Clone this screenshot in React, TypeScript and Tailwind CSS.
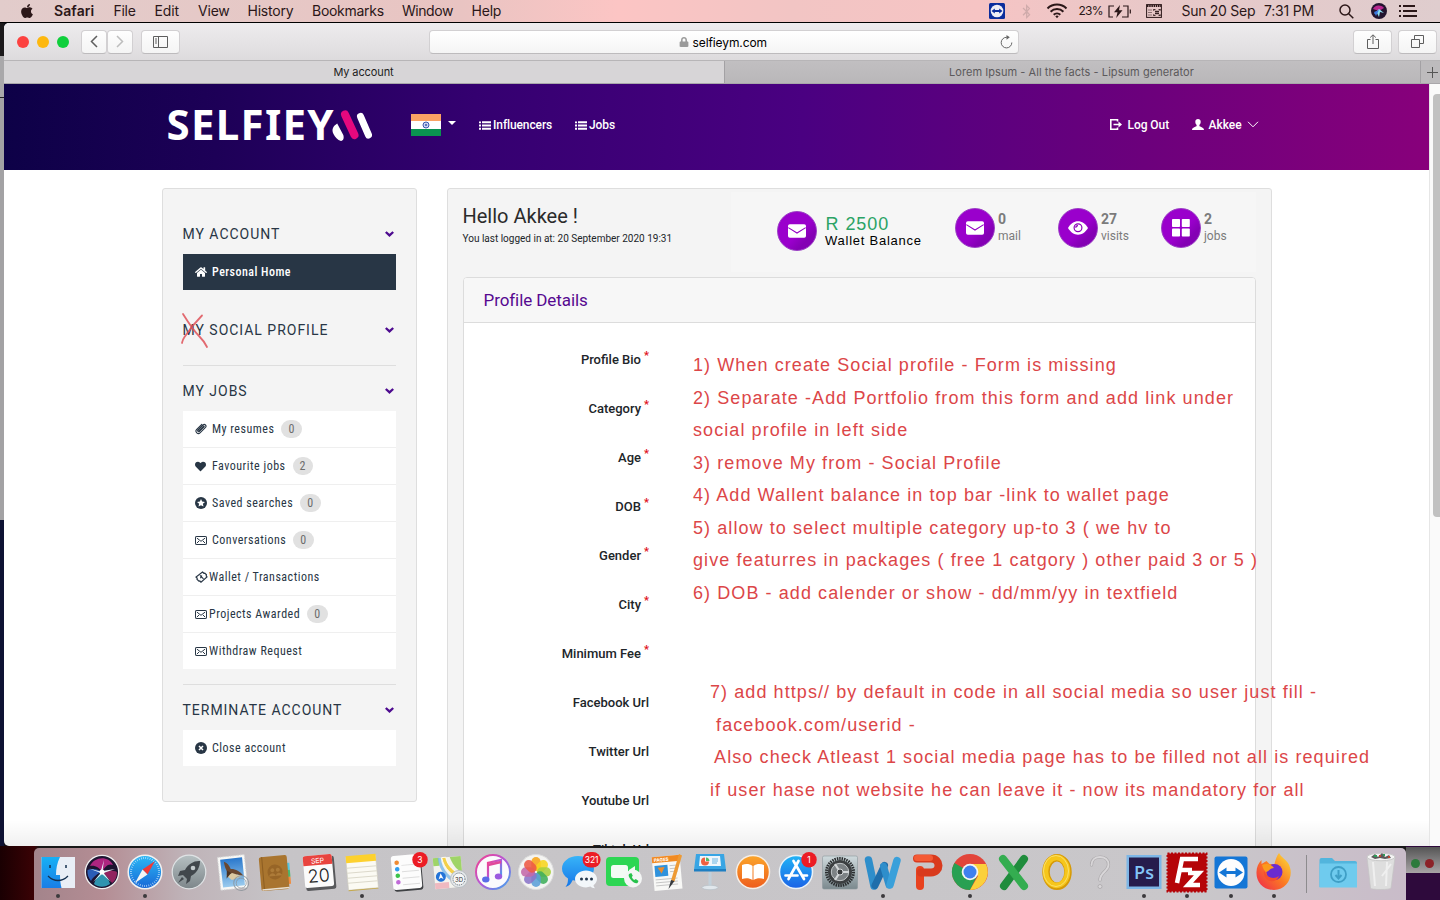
import type { ReactNode } from "react";
import { FaApple, FaHeart, FaHome, FaLock, FaBluetoothB } from "react-icons/fa";

/* ---------- macOS menu bar ---------- */

const menus: [string, string][] = [
  ["File", "w-[41px] tracking-[-0.3px]"],
  ["Edit", "w-[43.5px] tracking-[-0.1px]"],
  ["View", "w-[49.5px] tracking-[-0.2px]"],
  ["History", "w-[64.5px] tracking-[-0.22px]"],
  ["Bookmarks", "w-[90px] tracking-[-0.28px]"],
  ["Window", "w-[69.5px] tracking-[-0.45px]"],
  ["Help", "w-[40px] tracking-[-0.2px]"],
];

function MenuBar() {
  return (
    <div className="flex h-[23px] shrink-0 items-center border-b border-black bg-[linear-gradient(90deg,#e2cccb_0%,#e6c8c6_18%,#e9c4c2_32%,#fcc5c4_43%,#f2c5c4_55%,#f6c4c4_68%,#e8c8c8_80%,#dfcdce_100%)] pl-[19px] text-sm text-[#2b1718] font-[Inter,sans-serif]">
      <FaApple className="size-[16px]" />
      <span className="ml-[19px] w-[59.5px] font-semibold tracking-[0.1px]">Safari</span>
      {menus.map(([m, c]) => (
        <span key={m} className={c}>{m}</span>
      ))}
      <svg className="ml-[477.5px] shrink-0" width="16" height="16" viewBox="0 0 16 16">
        <rect width="16" height="16" rx="1.5" fill="#0c2d9c" />
        <circle cx="8" cy="8" r="6.3" fill="#f0eef5" />
        <path d="M2.5 8l3.3-2.6V7h4.4V5.4L13.5 8l-3.300 2.600V9H5.800v1.600z" fill="#0c2d9c" />
      </svg>
      <FaBluetoothB className="ml-[14px] size-[15px] shrink-0 text-[#cfabab]" />
      <svg className="ml-[12px] shrink-0" width="22" height="16" viewBox="0 0 22 16" fill="none" stroke="#2b1718" strokeWidth="2">
        <path d="M1.500 5.500a13.500 13.500 0 0 1 19 0M4.600 8.700a9 9 0 0 1 12.800 0M7.700 11.800a4.700 4.700 0 0 1 6.600 0" />
        <path d="M9.300 13.300a2.400 2.400 0 0 1 3.400 0L11 15.200z" fill="#2b1718" stroke="none" />
      </svg>
      <span className="ml-[10.500px] w-[29px] shrink-0 text-xs tracking-[-0.7px]">23%</span>
      <svg className="shrink-0" width="23" height="13" viewBox="0 0 23 13" fill="none" stroke="#2b1718" strokeWidth="1.200">
        <path d="M6 1H1v11h4M15 1h5v11h-6" />
        <path d="M22.300 4.500v4" />
        <path d="M12 0L6 7.200h3.500L8.200 13l6.300-7.700H11z" fill="#2b1718" stroke="none" />
      </svg>
      <svg className="ml-[15px] shrink-0" width="16" height="14" viewBox="0 0 16 14" fill="none" stroke="#2b1718">
        <rect x=".6" y=".6" width="14.800" height="12.800" />
        <path d="M1 2h14" strokeWidth="2" strokeDasharray="1.500 .7" />
        <path d="M2.500 6h3M2.500 8.500h3M2.500 11h3" strokeDasharray="1 1" />
        <path d="M9 7.500h4M9 9.500h4M10 6.500v4M12 6.500v4" strokeWidth=".9" />
        <path d="M7.500 5.500h2M12.500 5.500h2M7.500 11.500h2M12.500 11.500h2M7.800 5v2M14 5v2M7.800 10v2M14 10v2" strokeWidth=".8" />
      </svg>
      <span className="ml-[20px] w-[82.500px] shrink-0 tracking-[-0.28px]">Sun 20 Sep</span>
      <span className="w-[75px] shrink-0 tracking-[-0.2px]">7:31 PM</span>
      <svg className="shrink-0" width="15" height="15" viewBox="0 0 15 15" fill="none" stroke="#2b1718" strokeWidth="1.500">
        <circle cx="6" cy="6" r="5" />
        <path d="M9.700 9.700l4.600 4.600" />
      </svg>
      <svg className="ml-[17px] shrink-0" width="16" height="16" viewBox="0 0 16 16">
        <circle cx="8" cy="8" r="8" fill="#23142f" />
        <path d="M2 6a6.500 6.500 0 0 1 11 -1l-5 3z" fill="#b8288f" />
        <path d="M3 11l5-5 5 4-4-1-1 5-2-4z" fill="#8ce0f2" />
        <path d="M3 9l2 4 3-6z" fill="#3b78e0" />
      </svg>
      <svg className="ml-[12px] shrink-0" width="18" height="12" viewBox="0 0 18 12" stroke="#2b1718" strokeWidth="2">
        <path d="M0 1h2M4 1h12M0 6h2M4 6h14M0 11h2M4 11h14" />
      </svg>
    </div>
  );
}

/* ---------- Safari chrome ---------- */

function ToolButton({ className, children }: { className: string; children: ReactNode }) {
  return (
    <div className={"flex h-[24px] shrink-0 items-center justify-center rounded-[4px] border border-[#d2d0d2] border-b-[#bdbbbd] bg-[linear-gradient(#fefefe,#f4f4f4)] text-[#5e5e5e] " + className}>
      {children}
    </div>
  );
}

function Toolbar() {
  return (
    <div className="flex h-[38px] shrink-0 items-center border-b border-[#b7b5b7] bg-[linear-gradient(#eeecee,#dddbdd)] pl-[13px]">
      <i className="size-[12px] rounded-full bg-[#fc4240]" />
      <i className="ml-2 size-[12px] rounded-full bg-[#fdb80f]" />
      <i className="ml-2 size-[12px] rounded-full bg-[#10cf3c]" />
      <ToolButton className="ml-[12px] w-[26px]">
        <svg width="8" height="13" viewBox="0 0 8 13" fill="none" stroke="currentColor" strokeWidth="1.500"><path d="M7 1L1.500 6.500 7 12" /></svg>
      </ToolButton>
      <ToolButton className="w-[26px]">
        <svg width="8" height="13" viewBox="0 0 8 13" fill="none" stroke="#bdbdbd" strokeWidth="1.500"><path d="M1 1l5.500 5.500L1 12" /></svg>
      </ToolButton>
      <ToolButton className="ml-[8px] w-[39px]">
        <svg width="15" height="12" viewBox="0 0 15 12" fill="none" stroke="currentColor"><path d="M.5.5h14v11H.5zM5.500.5v11M2 3h2M2 5h2M2 7h2" /></svg>
      </ToolButton>
      <div className="ml-[249px] flex h-[24px] w-[590px] items-center rounded-[4px] border border-[#d2d0d2] border-b-[#bdbbbd] bg-[linear-gradient(#ffffff,#f4f4f4)] pl-[249px] text-xs text-black font-[Inter,sans-serif]">
        <FaLock className="size-[10px] text-[#9a9a9a]" />
        <span className="relative top-px ml-[3.500px] tracking-[-0.1px]">selfieym.com</span>
        <svg className="ml-auto mr-[5px]" width="13" height="14" viewBox="0 0 13 14" fill="none" stroke="#666"><path d="M11.800 7.500A5.300 5.300 0 1 1 6.500 2.300h2" /><path d="M6.500 0l3.300 2.300-3.300 2.400z" fill="#666" stroke="none" /></svg>
      </div>
      <ToolButton className="ml-[334px] w-[39px]">
        <svg width="12" height="15" viewBox="0 0 12 15" fill="none" stroke="currentColor"><path d="M3.500 5.500h-3v9h11v-9h-3M6 10V1M3.200 3.500L6 .8l2.800 2.700" /></svg>
      </ToolButton>
      <ToolButton className="ml-[6px] w-[39px]">
        <svg width="13" height="13" viewBox="0 0 13 13" fill="none" stroke="currentColor"><path d="M.5 4.500h8v8h-8zM3.500 4V.5h9v8H9" /></svg>
      </ToolButton>
    </div>
  );
}

function TabBar() {
  return (
    <div className="flex h-[23px] shrink-0 border-b border-[#a9a7aa] text-[11px] leading-[22px] font-[Inter,sans-serif]">
      <div className="w-[720px] bg-[#d7d5d7] text-center text-[#1d1d1d]"><span className="relative -left-[0.500px] tracking-[-0.1px]">My account</span></div>
      <div className="w-[697px] border-x border-[#a3a1a4] bg-[linear-gradient(#c1bfc1,#b9b7b9)] text-center text-[#5b595b]"><span className="relative -left-[1px] tracking-[0.05px]">Lorem Ipsum - All the facts - Lipsum generator</span></div>
      <div className="flex flex-1 items-center bg-[#bdbbbd] pl-[6px] text-[#555]">
        <svg width="11" height="11" viewBox="0 0 11 11" stroke="currentColor"><path d="M5.500 0v11M0 5.500h11" /></svg>
      </div>
    </div>
  );
}

/* ---------- Site header ---------- */

const ListIcon = () => (
  <svg width="12" height="9" viewBox="0 0 12 9" fill="currentColor">
    <path d="M0 .4h2v1.900H0zM0 3.600h2v1.900H0zM0 6.800h2v1.900H0zM3 .3h9v2H3zM3 3.500h9v2H3zM3 6.700h9v2H3z" />
  </svg>
);

function SiteHeader() {
  return (
    <header className="flex h-[86px] shrink-0 items-center bg-[linear-gradient(92deg,#0d0147_0%,#1d0057_15%,#340070_33%,#4a0081_56%,#6c007c_80%,#88007b_100%)] pb-1 pl-[162px] text-xs font-medium text-white font-[Roboto,sans-serif]">
      <div className="flex h-[42px] w-[245px] items-center pl-[0.5px]">
        <span className="-mt-[2px] text-[42px] leading-[42px] font-bold tracking-[1.3px] font-[Noto_Sans,sans-serif]">SELFIEY</span>
        <svg className="-ml-[4px] shrink-0" width="44" height="32" viewBox="0 0 44 32">
          <path d="M6.200 14.500C1.500 17.500.5 21 2.500 25c1.500 3.300 4 6 7.500 7 2.500-.4 3.200-3 2.300-6z" fill="#fff" />
          <path d="M14 5.500l9.500 20.500" stroke="#e5087e" strokeWidth="8" strokeLinecap="round" />
          <path d="M29.500 7.500l8 18.500" stroke="#fff" strokeWidth="7" strokeLinecap="round" />
        </svg>
      </div>
      <svg width="30" height="22" viewBox="0 0 30 22">
        <path fill="#fba364" d="M0 0h30v7.500H0z" />
        <path fill="#fff" d="M0 7h30v8H0z" />
        <path fill="#0a9350" d="M0 15h30v7H0z" />
        <circle cx="15" cy="11" r="3" fill="#c9d2f0" stroke="#3a56b0" />
        <circle cx="15" cy="11" r="1" fill="#3a56b0" />
      </svg>
      <svg className="mb-[5px] ml-[7px]" width="8" height="4" viewBox="0 0 8 4"><path d="M0 0h8L4 4z" fill="#fff" /></svg>
      <a className="ml-[23px] flex items-center gap-[2px]"><ListIcon /><span className="w-[82px] tracking-[-0.1px]">Influencers</span></a>
      <a className="flex items-center gap-[2px]"><ListIcon /><span className="w-[521px] tracking-[-0.1px]">Jobs</span></a>
      <a className="flex items-center">
        <svg className="-mt-px" width="12" height="11" viewBox="0 0 12 11" fill="none" stroke="#fff" strokeWidth="1.600"><path d="M7.500 2.500V.8H.8v9.400h6.700V8.500M3.500 5.500h6" /><path d="M8.500 2.500l3.500 3-3.500 3z" fill="#fff" stroke="none" /></svg>
        <span className="ml-[5.500px] w-[64px] tracking-[-0.05px]">Log Out</span>
      </a>
      <a className="flex items-center">
        <svg className="-mt-px" width="12" height="11" viewBox="0 0 12 11" fill="#fff"><path d="M3.300 2.800C3.300 1 4.400 0 6 0s2.700 1 2.700 2.800c0 1.500-.6 2.500-1.300 3.200v1.100c0 .6 4.600 1.200 4.600 3.900H0c0-2.700 4.600-3.300 4.600-3.900V6C3.900 5.300 3.300 4.300 3.300 2.800z" /></svg>
        <span className="ml-[5px]">Akkee</span>
        <svg className="-mt-px ml-[5px]" width="12" height="7" viewBox="0 0 12 7" fill="none" stroke="#fff"><path d="M1 .8l5 5 5-5" /></svg>
      </a>
    </header>
  );
}

/* ---------- Account sidebar ---------- */

const MailIcon = () => (
  <svg width="12" height="9" viewBox="0 0 12 9" fill="none" stroke="currentColor" strokeWidth="1">
    <rect x=".5" y=".5" width="11" height="8" rx=".6" />
    <path d="M1.800 2L6 5.300 10.200 2M1.800 7.200L4 5M10.200 7.200L8 5" />
  </svg>
);
const ClipIcon = () => (
  <svg width="12" height="12" viewBox="0 0 12 12" fill="none" stroke="currentColor" strokeWidth="1.100" strokeLinecap="round">
    <path d="M8.800 3.200L4 8c-.9.900-1.900-.1-1-1l5-5c1.700-1.500 4 .7 2.500 2.400L5 9.900C3 11.800-.4 8.800 1.500 6.600L6.800 1.300" />
    <path d="M3.900 8.900l5.300-5.300" />
  </svg>
);
const TicketIcon = () => (
  <svg width="13" height="12" viewBox="0 0 13 12" fill="none" stroke="currentColor" strokeWidth="1.200">
    <path d="M7.500 1l1.400 1.300.9-.2 1.600 1.700-.2 1L12 6 6 11.200 4.800 10l-.9.100L2 8.300l.2-1L1 6z" />
    <path d="M5 4.300l3.500 3.500M6.800 4.500L5.500 7.300" />
  </svg>
);
const StarCircle = () => (
  <svg width="12" height="12" viewBox="0 0 12 12"><circle cx="6" cy="6" r="6" fill="currentColor" /><path d="M6 2l1.150 2.600 2.850.3-2.100 1.900.6 2.800L6 8.200 3.500 9.600l.6-2.800L2 4.900l2.850-.3z" fill="#fff" /></svg>
);
const CloseCircle = () => (
  <svg width="12" height="12" viewBox="0 0 12 12"><circle cx="6" cy="6" r="6" fill="currentColor" /><path d="M4 4l4 4M8 4L4 8" stroke="#fff" strokeWidth="1.500" /></svg>
);

function Heading({ children, className = "" }: { children: ReactNode; className?: string }) {
  return (
    <h3 className={"relative -ml-[0.5px] flex h-5 items-center justify-between pr-[2px] text-sm leading-5 tracking-[0.98px] " + className}>
      {children}
      <svg width="9" height="6" viewBox="0 0 9 6" fill="none" stroke="#4d0a8f" strokeWidth="2.300"><path d="M.8 1l3.700 3.400L8.200 1" /></svg>
    </h3>
  );
}

const jobs: { icon: ReactNode; label: string; gap: string; count?: number }[] = [
  { icon: <ClipIcon />, label: "My resumes", gap: "ml-[5px]", count: 0 },
  { icon: <FaHeart className="size-[11px]" />, label: "Favourite jobs", gap: "ml-[6px]", count: 2 },
  { icon: <StarCircle />, label: "Saved searches", gap: "ml-[5px]", count: 0 },
  { icon: <MailIcon />, label: "Conversations", gap: "ml-[5px]", count: 0 },
  { icon: <TicketIcon />, label: "Wallet / Transactions", gap: "ml-[1px]" },
  { icon: <MailIcon />, label: "Projects Awarded", gap: "ml-[2px]", count: 0 },
  { icon: <MailIcon />, label: "Withdraw Request", gap: "ml-[2px]" },
];

function Sidebar() {
  return (
    <aside className="h-[614px] w-[255px] shrink-0 rounded-[3px] border border-[#dedede] bg-[#f4f4f4] px-5 pt-[35px] text-[#283645]">
      <Heading>MY ACCOUNT</Heading>
      <div className="mt-[10px] flex h-9 items-center bg-[#283645] pl-[12px] text-xs font-medium tracking-[0.47px] text-white [font-stretch:75%]">
        <FaHome className="size-[12px]" />
        <span className="ml-[5px]">Personal Home</span>
      </div>
      <Heading className="mt-[30px]">
        MY SOCIAL PROFILE
        <svg className="absolute -left-[4px] -top-[9px]" width="32" height="38" viewBox="0 0 32 38" fill="none" stroke="#e0525a" strokeWidth="1.800" strokeLinecap="round" opacity=".85">
          <path d="M4 3c5 8 11 17 16 22 4 4 6 7 8 11M23 4.500C16.500 11 9.500 20 5.500 26c-2 3-2 4-2.500 6" />
        </svg>
      </Heading>
      <hr className="mt-[25px] h-px border-0 bg-[#dedede]" />
      <Heading className="mt-[15px]">MY JOBS</Heading>
      <ul className="mt-[10px] divide-y divide-[#efefef] bg-white text-xs tracking-[0.5px] [font-stretch:75%]">
        {jobs.map((j, i) => (
          <li key={j.label} className={"flex items-center pl-[12px] " + (i < jobs.length - 1 ? "h-[37px]" : "h-[36px]")}>
            {j.icon}
            <span className={j.gap}>{j.label}</span>
            {j.count !== undefined && (
              <span className="ml-[7px] flex h-[18px] w-[20.5px] items-center justify-center rounded-full bg-[#e1e1e1] text-[#6c6c6c]">{j.count}</span>
            )}
          </li>
        ))}
      </ul>
      <hr className="mt-[15px] h-px border-0 bg-[#dedede]" />
      <Heading className="mt-[15px]">TERMINATE ACCOUNT</Heading>
      <div className="mt-[10px] flex h-9 items-center bg-white pl-[12px] text-xs tracking-[0.5px] [font-stretch:75%]">
        <CloseCircle />
        <span className="ml-[5px]">Close account</span>
      </div>
    </aside>
  );
}

/* ---------- Profile panel ---------- */

function Bubble({ children }: { children: ReactNode }) {
  return (
    <span className="flex size-10 shrink-0 items-center justify-center rounded-full border border-[#9a3fc4] bg-[linear-gradient(135deg,#9a00cc_55%,#8400b4_75%)]">
      {children}
    </span>
  );
}
const Envelope = () => (
  <svg width="18" height="14" viewBox="0 0 18 14"><rect y=".3" width="18" height="13.400" rx="1.800" fill="#fff" /><path d="M.3 3.600L9 9l8.700-5.400" fill="none" stroke="#9400c4" strokeWidth="1.100" /></svg>
);
const Eye = () => (
  <svg width="20" height="14" viewBox="0 0 20 14"><path d="M0 7c2.500-4.300 6-6.700 10-6.700S17.500 2.700 20 7c-2.500 4.300-6 6.700-10 6.700S2.500 11.300 0 7z" fill="#fff" /><circle cx="10" cy="6.800" r="3.900" fill="#fff" stroke="#8a00b8" strokeWidth="1.200" /><path d="M7.800 6.800A2.200 2.200 0 0 1 10 4.600" fill="none" stroke="#8a00b8" strokeWidth="1.200" /></svg>
);
const Grid = () => (
  <svg width="18" height="18" viewBox="0 0 18 18" fill="#fff"><rect width="8" height="8" rx=".8" /><rect x="9.800" width="8" height="8" rx=".8" /><rect y="9.600" width="8" height="8" rx=".8" /><rect x="9.800" y="9.600" width="8" height="8" rx=".8" /></svg>
);

const stats = [
  { icon: <Envelope />, value: "0", label: "mail" },
  { icon: <Eye />, value: "27", label: "visits" },
  { icon: <Grid />, value: "2", label: "jobs" },
];

const fields = [
  ["Profile Bio", true], ["Category", true], ["Age", true], ["DOB", true], ["Gender", true], ["City", true], ["Minimum Fee", true],
  ["Facebook Url", false], ["Twitter Url", false], ["Youtube Url", false], ["Tiktok Url", false],
] as const;

function ProfilePanel() {
  return (
    <main className="ml-[30px] h-[700px] w-[825px] shrink-0 rounded-[3px] border border-[#dedede] bg-[#f4f4f4] px-[15px] text-[#212529]">
      <div className="flex h-[88px]">
        <div className="w-[268px] shrink-0 pt-[14px]">
          <h2 className="-ml-[0.5px] text-xl leading-[26px] text-[#2b2b2b]">Hello Akkee !</h2>
          <p className="-ml-[0.5px] mt-[2px] text-[10px] leading-4">You last logged in at: 20 September 2020 19:31</p>
        </div>
        <div className="mb-[5px] mt-[3px] flex flex-1 bg-[#f6f6f6] pl-[46px]">
          <div className="flex w-[178px] shrink-0 pt-[19px]">
            <Bubble><Envelope /></Bubble>
            <div className="ml-[8.5px] pt-[3px] font-['Liberation_Sans',sans-serif]">
              <div className="text-lg leading-5 tracking-[0.95px] text-[#2ba365]">R 2500</div>
              <div className="-ml-[0.5px] text-[13px] leading-[14px] tracking-[0.75px] text-black">Wallet Balance</div>
            </div>
          </div>
          {stats.map((s) => (
            <div key={s.label} className="flex w-[103px] shrink-0 gap-[3px] pt-4 text-[#7b7b7b] last:w-[70px]">
              <Bubble>{s.icon}</Bubble>
              <div className="pt-[3px]">
                <div className="text-sm leading-4 font-bold">{s.value}</div>
                <div className="text-xs leading-[18px]">{s.label}</div>
              </div>
            </div>
          ))}
        </div>
      </div>
      <section className="h-[612px] w-[793px] rounded-t-[4px] border border-[#dcdcdc] bg-white">
        <h4 className="h-[45px] rounded-t-[3px] border-b border-[#dcdcdc] bg-[#f7f7f7] pl-[19.5px] text-[17px] leading-[44px] tracking-[-0.08px] text-[#560990]">Profile Details</h4>
        <div className="w-[185px] pt-[12px] text-[13px] font-medium">
          {fields.map(([label, required]) => (
            <div key={label} className="flex h-[49px] items-center justify-end">
              {label}
              {required && <sup className="-top-[4px] ml-[3px] w-[5px] text-[11px] font-bold text-[#e0101a]">*</sup>}
            </div>
          ))}
        </div>
      </section>
    </main>
  );
}

/* ---------- Review notes written over the page ---------- */

function Notes() {
  return (
    <div className="pointer-events-none absolute left-[693px] top-[349px] text-lg leading-[32.5px] whitespace-pre text-[#dc4648] font-['Liberation_Sans',sans-serif]">
      <div className="tracking-[1.08px]">1) When create Social profile - Form is missing</div>
      <div className="tracking-[1.08px]">2) Separate -Add Portfolio from this form and add link under</div>
      <div className="tracking-[1.08px]">social profile in left side</div>
      <div className="tracking-[1.08px]">3) remove My from - Social Profile</div>
      <div className="tracking-[1.08px]">4) Add Wallent balance in top bar -link to wallet page</div>
      <div className="tracking-[1.08px]">5) allow to select multiple category up-to 3 ( we hv to</div>
      <div className="tracking-[1.09px]">give featurres in packages ( free 1 catgory ) other paid 3 or 5 )</div>
      <div className="tracking-[1.08px]">6) DOB - add calender or show - dd/mm/yy in textfield</div>
      <div className="ml-[17px] mt-[67px] tracking-[1.08px]">7) add https// by default in code in all social media so user just fill -</div>
      <div className="ml-[17px] tracking-[1.08px]"> facebook.com/userid -</div>
      <div className="ml-[16px] tracking-[1.090px]"> Also check Atleast 1 social media page has to be filled not all is required</div>
      <div className="ml-[17px] tracking-[1.08px]">if user hase not website he can leave it - now its mandatory for all</div>
    </div>
  );
}

/* ---------- Dock ---------- */

const Dot = () => <circle cx="22" cy="48" r="2" fill="#3c3a3d" />;
const Badge = ({ x, w, children }: { x: number; w: number; children: string }) => (
  <g>
    <rect x={x - w / 2} y="4" width={w} height="15.500" rx="7.750" fill="#ec1c24" />
    <text x={x} y="15" fontSize="8.500" fill="#fff" textAnchor="middle" fontFamily="Inter">{children}</text>
  </g>
);

const petals: [number, string][] = [
  [0, "#f7a418"], [45, "#f7d51c"], [90, "#a8cf3c"], [135, "#3fae5a"], [180, "#5b9fd8"], [225, "#8a74c8"], [270, "#c468a8"], [315, "#ee5a44"],
];

const dockIcons: ReactNode[] = [
  <g key="finder"><path d="M5.500 9H39v31H5.500z" fill="#e9eef6" /><path d="M5.500 9H24c-3 6-4 12-4 18h4c0 5 .5 9 1.500 13h-20z" fill="url(#finder)" /><path d="M14 17v3M30 17v3" stroke="#15304f" strokeWidth="1.500" /><path d="M12 28c6 6 14 6 20 0" fill="none" stroke="#15304f" strokeWidth="1.300" /><Dot /></g>,
  <g key="siri"><circle cx="22" cy="24" r="16.700" fill="#1c1430" stroke="#eee" strokeWidth="1.300" /><path d="M10 18C14 9 28 7 33 17c-5-2-8 2-11 7-2-4-7-7-12-6z" fill="#c8288e" opacity=".85" /><path d="M7.500 22c5-2 10-1 14.500 2-4 1-9 5-11 9-2.500-3-4-7-3.500-11z" fill="#2e6fd8" opacity=".8" /><path d="M22 24c5-2 11-2 15 0 0 5-2 9-5 11-3-4-6-8-10-11z" fill="#c32a74" opacity=".7" /><path d="M22 24c-4 3-7 8-8 12 5 4 12 3 16 0-1-4-4-9-8-12z" fill="#35b4cf" opacity=".8" /><path d="M22 24L9 20.500 21 25 13 34l9-8 9 8-7.500-9L35 21l-12.500 2L24 12l-3 10.500z" fill="#e9f7fb" /><circle cx="22" cy="24" r="2.500" fill="#fff" /></g>,
  <g key="safari"><circle cx="22" cy="24" r="16.800" fill="url(#safari)" stroke="#f1f1f1" strokeWidth="1.500" /><circle cx="22" cy="24" r="14" fill="none" stroke="#cfeaff" strokeWidth="2" strokeDasharray=".6 1.600" /><path d="M32 13L24.500 26.500 19.500 21.500z" fill="#ee3a38" /><path d="M12 35l7.500-13.500 5 5z" fill="#f4f4f4" /><Dot /></g>,
  <g key="launch"><circle cx="22" cy="24" r="16.800" fill="url(#steel)" stroke="#dfe3e5" strokeWidth="1.200" /><path d="M33 13c-6-.5-12 3-15 9l-5 1-2 5 5-1 4 4-1 5 4-3 1-5c6-3 9-9 9-15z" fill="#41474c" /><circle cx="26" cy="20" r="2.300" fill="#c3cacc" /><path d="M15 29l-4 6 6-4z" fill="#41474c" /></g>,
  <g key="mail" transform="rotate(-6 22 24)"><path d="M9 8h27v33H9z" fill="#f8f8f6" stroke="#d4d4d4" strokeDasharray="1.500 1" /><path d="M11.500 10.500h22v28h-22z" fill="url(#sky)" /><path d="M15 13c3 1 5 4 6 8 4 0 9 3 12 8l-6-2-5 2-4-4c-2-4-3-8-3-12z" fill="#6a4730" /><path d="M16 27l6-2 9 4-6 2-4 1z" fill="#dcc9a2" /><path d="M17 22l4 3-5 5z" fill="#4a3324" /><circle cx="30" cy="36" r="7.500" fill="none" stroke="#8b9298" strokeWidth="1" opacity=".8" /><circle cx="30" cy="36" r="5" fill="none" stroke="#8b9298" strokeWidth=".7" /></g>,
  <g key="contacts" transform="rotate(-5 22 24)"><path d="M33 16h4v7h-4z" fill="#54c4e0" /><path d="M33 23h4v7h-4z" fill="#49b76d" /><path d="M33 30h4v7h-4z" fill="#f08c3c" /><rect x="7" y="8" width="28" height="34" rx="2" fill="#a9752f" /><path d="M10 8v34" stroke="#8d5e22" /><rect x="8" y="40" width="27" height="1.500" fill="#e8e0d2" /><circle cx="22" cy="24" r="7.500" fill="#976527" /><circle cx="19.500" cy="22" r="2" fill="#ad7b38" /><circle cx="25" cy="22" r="2" fill="#ad7b38" /><path d="M15.500 28c2-4 6-4 7 0 1-4 5-4 6.500 0z" fill="#ad7b38" /></g>,
  <g key="calendar" transform="rotate(-5 22 24)"><rect x="8" y="9" width="30" height="33" rx="2" fill="#58595c" /><rect x="7" y="7" width="29" height="32" rx="2" fill="#fbfbfb" /><path d="M7 17V9a2 2 0 0 1 2-2h25a2 2 0 0 1 2 2v8z" fill="#e8443f" /><text x="21.500" y="15" fontSize="7" fill="#fff" textAnchor="middle" fontFamily="Inter">SEP</text><text x="21.500" y="34" fontSize="18" fill="#222" textAnchor="middle" fontFamily="Inter" fontWeight="300">20</text></g>,
  <g key="notes" transform="rotate(-5 22 24)"><path d="M7 8h30v33H7z" fill="#fbfaf3" stroke="#cbc9bd" strokeWidth=".6" /><path d="M7 7h30v7H7z" fill="#fdd12e" /><path d="M7 19h30M7 24h30M7 29h30M7 34h30" stroke="#dcd9cb" /><path d="M7 41.500h30" stroke="#c5a84a" /></g>,
  <g key="reminders"><g transform="rotate(-5 22 24)"><rect x="9" y="8" width="29" height="35" rx="3" fill="#3f4144" /><rect x="8" y="7" width="29" height="34" rx="3" fill="#fcfcfc" /><circle cx="13.500" cy="14" r="2.300" fill="#f08c34" /><circle cx="13.500" cy="20.500" r="2.300" fill="#2f9df0" /><circle cx="13.500" cy="27" r="2.300" fill="#3cc24c" /><circle cx="13.500" cy="33.500" r="2.300" fill="#c06ad8" /><path d="M18 17h17M18 23.500h17M18 30h17M18 36.500h17" stroke="#ddd" /></g><Badge x={36} w={15.5}>3</Badge></g>,
  <g key="maps"><g transform="rotate(-5 22 24)"><path d="M7 9h28v31H7z" fill="#f4f3ee" /><path d="M24 9h11v16c-6-3-9-9-11-16z" fill="#9fd468" /><path d="M7 9h6v8H7z" fill="#9fd468" /><path d="M7 34h14v6H7z" fill="#efb9c0" /><path d="M16 9h4c1 9 7 15 15 19v5C25 29 17 20 16 9z" fill="#f4d04a" stroke="#fff" strokeWidth=".8" /><path d="M12 9h3c0 12 8 22 20 28v3C20 34 12 22 12 9z" fill="#78b7e8" opacity=".8" /><circle cx="13.500" cy="28" r="5" fill="#2474d8" /><path d="M13.500 24.500l2.500 6-2.500-1.500-2.500 1.500z" fill="#fff" /></g><circle cx="32" cy="31" r="8.500" fill="#e6e9eb" stroke="#b9bec2" /><circle cx="32" cy="31" r="6" fill="#f7f7f7" stroke="#51606a" strokeWidth="1" strokeDasharray="1 1" /><text x="32" y="33.500" fontSize="6" textAnchor="middle" fill="#333" fontFamily="Inter">3D</text></g>,
  <g key="itunes"><circle cx="22" cy="24" r="17" fill="#fbfbfd" stroke="url(#tunes)" strokeWidth="2" /><path d="M17 31V15l13-3v16" fill="none" stroke="url(#tunes)" strokeWidth="2.200" /><path d="M17 17l13-3" stroke="#e0489a" strokeWidth="2.500" /><ellipse cx="14.800" cy="31.500" rx="3.700" ry="3" fill="#5a6ce8" /><ellipse cx="27.500" cy="28.500" rx="3.700" ry="3" fill="#9b5ae0" /></g>,
  <g key="photos"><circle cx="22" cy="24" r="17.500" fill="#f4f4f2" stroke="#dcdcdc" />{petals.map(([a, c]) => (<rect key={a} x="17.300" y="9" width="9.400" height="14" rx="4.700" fill={c} opacity=".88" transform={`rotate(${a} 22 24)`} />))}</g>,
  <g key="messages"><path d="M21 8c9 0 16 5.500 16 12.500S30 33 21 33c-2 0-4-.2-5.500-.8C14 36 12 38 8.500 39c2-2.500 2.500-5 2.500-8.500-4-2.500-6-6-6-10C5 13.500 12 8 21 8z" fill="url(#msg)" /><path d="M29 22.500c6 0 11 3.800 11 8.500 0 2.500-1.500 4.800-3.500 6.300 0 1 .5 2 1.500 3-2 0-3.500-.7-4.500-1.700-1.500.5-3 .8-4.500.8-6 0-11-3.800-11-8.400s5-8.500 11-8.500z" fill="#f3f7fa" /><circle cx="24.500" cy="31" r="1.500" fill="#23374d" /><circle cx="29.500" cy="31" r="1.500" fill="#23374d" /><circle cx="34.500" cy="31" r="1.500" fill="#23374d" /><Badge x={34.6} w={18}>321</Badge></g>,
  <g key="facetime"><rect x="5" y="9" width="33" height="29" rx="4" fill="#2dd653" /><rect x="10" y="17" width="17" height="13" rx="2.500" fill="#f3fbf4" /><path d="M28 22l6-4v11l-6-4z" fill="#f3fbf4" /><circle cx="32" cy="30.500" r="9" fill="#f4f6f5" /><path d="M28 26c-2 3 5 10.500 8.500 9l1-2-2.700-2-1.500 1c-1-.5-2.200-2-2.500-3l1-1.300-1.500-2.700z" fill="#27c24c" /></g>,
  <g key="pages"><g transform="rotate(-5 22 24)"><path d="M9 8h28v34H9z" fill="#f8f8f6" /><path d="M9 8h28v6H9z" fill="#f18a22" /><text x="11" y="13" fontSize="4.500" fill="#fff" fontFamily="Inter" fontWeight="700">PAGES</text><path d="M11 17h13v11H11z" fill="#2f92dc" /><path d="M14 19h7l-3.500 6z" fill="#ee8b2c" /><path d="M26 18h8M26 21h8M26 24h8M11 31h22M11 34h22M11 37h22" stroke="#bbb" strokeWidth=".8" /></g><path d="M35 6l3 1.500-7.500 26-3.500-1z" fill="#ee9a34" /><path d="M30.500 33l-3.500-1-2.500 9z" fill="#36393d" /></g>,
  <g key="keynote"><path d="M20.500 24h3v14h-3z" fill="#c2d0da" /><ellipse cx="22" cy="39.500" rx="8" ry="2.200" fill="#e1e7ec" stroke="#b2bcc4" strokeWidth=".6" /><path d="M8 6h28l2 16H6z" fill="#38a5e4" /><path d="M12 8h20l1 10H11z" fill="#eef6fb" /><path d="M17 9.500a4 4 0 1 0 4 4h-4z" fill="#ee6040" /><path d="M18 9.500a4 4 0 0 1 3.500 3.500H18z" fill="#54bb64" /><path d="M24 11h6M24 13h6M24 15h5" stroke="#47a6dd" strokeWidth=".8" /><path d="M6 21h32v2.500H6z" fill="#1f7fc2" /></g>,
  <g key="books"><circle cx="22" cy="24" r="16.500" fill="url(#books)" stroke="#f5eee6" strokeWidth="1.500" /><path d="M21.500 18c-3-2.300-7-2.300-10.500-1v14c3.500-1.200 7.500-1 10.500 1zM22.500 18c3-2.300 7-2.300 10.500-1v14c-3.500-1.200-7.500-1-10.500 1z" fill="#fff" /></g>,
  <g key="store"><circle cx="22" cy="24" r="16.500" fill="url(#store)" stroke="#eaf2f8" strokeWidth="1.500" /><path d="M24.500 13L14.500 31M19.500 13l10.500 18M11.500 27.500h12M28 27.500h5" stroke="#fff" strokeWidth="2.700" strokeLinecap="round" /><Badge x={35} w={15.5}>1</Badge></g>,
  <g key="prefs"><rect x="4.500" y="8" width="35" height="33" rx="1.500" fill="url(#prefs)" stroke="#8b979c" strokeWidth=".6" /><circle cx="22" cy="24" r="13.500" fill="none" stroke="#292c2e" strokeWidth="3" strokeDasharray="1.500 .9" /><circle cx="22" cy="24" r="12" fill="#3c3f41" /><circle cx="22" cy="24" r="8.700" fill="#7d8285" stroke="#c2c6c8" strokeWidth="1" /><path d="M22 24l9 0M22 24l-5-8M22 24l-5 8" stroke="#d3d6d8" strokeWidth="2.200" /><circle cx="22" cy="24" r="3" fill="#3a3c3e" stroke="#d3d6d8" /></g>,
  <g key="word" fill="none" strokeLinecap="round" strokeLinejoin="round"><path d="M7.500 12l5.500 26" stroke="#2e8ecb" strokeWidth="7.500" /><path d="M14 37.500l9.500-20" stroke="#1f6eab" strokeWidth="7" /><path d="M22.500 18L28 37" stroke="#2e8ecb" strokeWidth="7" /><path d="M29 37l7-24.500" stroke="#3aa0da" strokeWidth="7.500" /><circle cx="22" cy="48" r="2" fill="#3c3a3d" /></g>,
  <g key="ppt" fill="none" strokeLinecap="round" strokeLinejoin="round"><path d="M15 38V22" stroke="#e8421f" strokeWidth="8" /><path d="M12 10.500h14c10 0 10 14 0 14H16" stroke="#d93a1d" strokeWidth="8" /><path d="M12 10h13" stroke="#f45a35" strokeWidth="6" /></g>,
  <g key="chrome"><circle cx="22" cy="24" r="18" fill="#e2453a" /><path d="M22 24L6.400 15A18 18 0 0 0 22 42l7-14z" fill="#28a052" /><path d="M22 16h16a18 18 0 0 1-16 26l8-14z" fill="#fbd03b" /><circle cx="22" cy="24" r="8.300" fill="#f4f4f4" /><circle cx="22" cy="24" r="6.500" fill="#3f80ee" /><Dot /></g>,
  <g key="excel" fill="none" strokeLinecap="round"><path d="M32 11L12 38" stroke="#1f8c3c" strokeWidth="8" /><path d="M11 11l21 27" stroke="#34ad50" strokeWidth="8" /></g>,
  <g key="outlook"><ellipse cx="22" cy="24" rx="11" ry="14.300" fill="none" stroke="#d69a07" strokeWidth="7.500" /><ellipse cx="21.500" cy="23.500" rx="11" ry="14" fill="none" stroke="#f6c61b" strokeWidth="5.500" /><ellipse cx="21" cy="23" rx="12.500" ry="15.500" fill="none" stroke="#fbe06a" strokeWidth="1" /></g>,
  <g key="help"><path d="M13.500 17c0-5 3.500-8 8.500-8s8.500 3 8.500 7.500c0 7-8.500 7.500-8.500 15.500" fill="none" stroke="#aaa7aa" strokeWidth="3.200" strokeLinecap="round" /><path d="M13.500 17c0-5 3.500-8 8.500-8s8.500 3 8.500 7.500c0 7-8.500 7.500-8.500 15.500" fill="none" stroke="#d9d7d9" strokeWidth="2" strokeLinecap="round" /><circle cx="22" cy="38.500" r="2" fill="#d9d7d9" stroke="#aaa7aa" strokeWidth=".8" /></g>,
  <g key="ps"><rect x="4.500" y="7" width="35" height="34" fill="#7db6e6" /><rect x="7" y="9.500" width="30" height="29" fill="#261c4c" /><text x="22" y="30.500" fontSize="18" fontWeight="600" fill="#84c5f8" textAnchor="middle" fontFamily="Open Sans">Ps</text><Dot /></g>,
  <g key="fz"><rect x="2.500" y="5.500" width="39" height="38" fill="#b50508" stroke="#b50508" strokeWidth="2" strokeDasharray="2 1.500" /><path d="M12 35l5-24h16M15 22h12M23 25h11L23 37h12" fill="none" stroke="#fff" strokeWidth="4.500" /><Dot /></g>,
  <g key="tv"><rect x="5.500" y="8.500" width="33" height="32" rx="2" fill="#1476d6" /><circle cx="22" cy="24.500" r="13.500" fill="#fdfdfd" /><path d="M10 24.500l7.500-5v3.500h9v-3.500l7.500 5-7.500 5V26h-9v3.500z" fill="#1476d6" /><Dot /></g>,
  <g key="firefox"><path d="M27 5c2 4 6 6 9 10 7 11 0 27-14 27C11 42 4 34 4.500 24c0-5 2-9 5-12v4l5-3 3 3h5c1-4 2-8 4.500-11z" fill="url(#fox)" /><circle cx="22.500" cy="24" r="8" fill="#6a2bd0" /><path d="M10 17c4-2 9-1 12 3-4 0-4 3-8 4-2-1-3-4-4-7z" fill="#fb9a1c" /><path d="M12 22c2 8 10 10 15 6-3 9-17 6-15-6z" fill="#f4502e" /><Dot /></g>,
];

function Dock() {
  return (
    <div className="flex h-[52px] w-[1372px] shrink-0 rounded-t-[5px] bg-[linear-gradient(90deg,#a3848b_0%,#b48d94_5%,#bfb3b8_11%,#c6c4c7_18%,#c9c7ca_85%,#c9bcc9_100%)] pl-[2.300px]">
      <svg width="0" height="0">
        <defs>
          <linearGradient id="finder" x2="0" y2="1"><stop stopColor="#17b0f5" /><stop offset="1" stopColor="#1a7ee6" /></linearGradient>
          <linearGradient id="safari" x2="0" y2="1"><stop stopColor="#2cb9f5" /><stop offset="1" stopColor="#1766d6" /></linearGradient>
          <linearGradient id="steel" x2="0" y2="1"><stop stopColor="#b6c0c2" /><stop offset="1" stopColor="#7d868a" /></linearGradient>
          <linearGradient id="sky" x2="0" y2="1"><stop stopColor="#2a78cc" /><stop offset="1" stopColor="#9acbee" /></linearGradient>
          <linearGradient id="tunes" x1="0" y1="0" x2="1" y2="1"><stop stopColor="#f5408c" /><stop offset=".5" stopColor="#b45ad8" /><stop offset="1" stopColor="#38a8f0" /></linearGradient>
          <linearGradient id="msg" x2="0" y2="1"><stop stopColor="#38b4f8" /><stop offset="1" stopColor="#1576e8" /></linearGradient>
          <linearGradient id="books" x2="0" y2="1"><stop stopColor="#fba52a" /><stop offset="1" stopColor="#ee5c1c" /></linearGradient>
          <linearGradient id="store" x2="0" y2="1"><stop stopColor="#22b4f6" /><stop offset="1" stopColor="#1a62e6" /></linearGradient>
          <linearGradient id="prefs" x2="0" y2="1"><stop stopColor="#cfdadd" /><stop offset="1" stopColor="#7b898e" /></linearGradient>
          <linearGradient id="fox" x1="1" y1="0" x2="0" y2="1"><stop stopColor="#fde53c" /><stop offset=".5" stopColor="#fb7a22" /><stop offset="1" stopColor="#ee2450" /></linearGradient>
        </defs>
      </svg>
      {dockIcons.map((icon, i) => (
        <div key={i} className="w-[43.43px] shrink-0">
          <svg width="44" height="52" viewBox="0 0 44 52" className="overflow-visible">
            {icon}
            {i === 7 && <Dot />}
          </svg>
        </div>
      ))}
      <div className="ml-[10.500px] mt-[7px] h-[38px] w-px shrink-0 bg-[#8d8b8e]" />
      <svg className="ml-[11px] shrink-0" width="40" height="52" viewBox="0 0 40 52">
        <path d="M1.500 12a2 2 0 0 1 2-2H14l3 3h20a2 2 0 0 1 2 2v24H1.500z" fill="#52b5dd" />
        <path d="M1.500 15.500h37.500V39.500H1.500z" fill="#6fcbee" />
        <circle cx="20.500" cy="26.500" r="7.500" fill="none" stroke="#3f9fc6" strokeWidth="1.800" />
        <path d="M20.500 22v7M17.500 27l3 3.500 3-3.500" fill="none" stroke="#3f9fc6" strokeWidth="2" />
      </svg>
      <svg className="ml-[7px] shrink-0" width="32" height="52" viewBox="0 0 32 52">
        <path d="M2 9l3.500 31c.2 2 20 2 20.500 0L30 9z" fill="#dedede" stroke="#c4c4c4" strokeWidth=".7" />
        <path d="M8 14l2 24M22 14l-1 24M26 16l-9 12" stroke="#efefef" strokeWidth="2" />
        <ellipse cx="16" cy="9" rx="14" ry="3.800" fill="#f4f4f4" stroke="#c8c8c8" />
        <path d="M6 9l4-3 3 3 4-4 3 4 4-2 2 3-6 1-5-1-5 1z" fill="#5c5a5a" />
        <path d="M9 8h3M18 7h2" stroke="#2d9b58" strokeWidth="2" /><path d="M14 8h2M23 9h2" stroke="#c1452f" strokeWidth="2" />
      </svg>
    </div>
  );
}

export default function App() {
  return (
    <div className="relative flex h-[900px] w-[1440px] flex-col overflow-hidden bg-[#101018]">
      <MenuBar />
      <div className="flex h-[823px] shrink-0">
        <div className="w-1 shrink-0 bg-[linear-gradient(#1b191b_0_33px,#a9a8aa_33px_74px,#222_74px_75px,#a3a2a4_75px_497px,#0e1233_497px)]" />
        <div className="flex w-[1436px] shrink-0 flex-col overflow-hidden rounded-bl-[5px] rounded-tl-[5px] bg-white">
          <Toolbar />
          <TabBar />
          <div className="flex min-h-0 flex-1">
            <div className="relative flex w-[1425px] flex-col overflow-hidden">
              <SiteHeader />
              <div className="flex pl-[158px] pt-[18px] font-[Roboto,sans-serif]">
                <Sidebar />
                <ProfilePanel />
              </div>
              <div className="absolute inset-x-0 bottom-0 h-[26px] bg-[linear-gradient(transparent,#0000000f)]" />
            </div>
            <div className="flex-1 border-l border-[#e6e6e6] bg-[#fafafa] pl-[3px] pt-[10px]">
              <div className="h-[423px] w-[7px] rounded-l-[4px] bg-[#c1c1c1]" />
            </div>
          </div>
        </div>
      </div>
      <div className="flex flex-1 items-end bg-[linear-gradient(90deg,#1a0002,#3a0205_34px,#181818_40px)]">
        <div className="w-[34px] shrink-0" />
        <Dock />
        <div className="flex h-full flex-1 flex-col bg-[#2e0a3c] pt-px">
          <div className="flex h-[26px] items-center gap-[5px] bg-[linear-gradient(#555,#a8a4a6)] pl-[5px] pt-[6px]">
            <i className="size-[9px] rounded-full bg-[#2c7a3c]" />
            <i className="size-[9px] rounded-full bg-[#8c2228]" />
          </div>
        </div>
      </div>
      <Notes />
    </div>
  );
}
